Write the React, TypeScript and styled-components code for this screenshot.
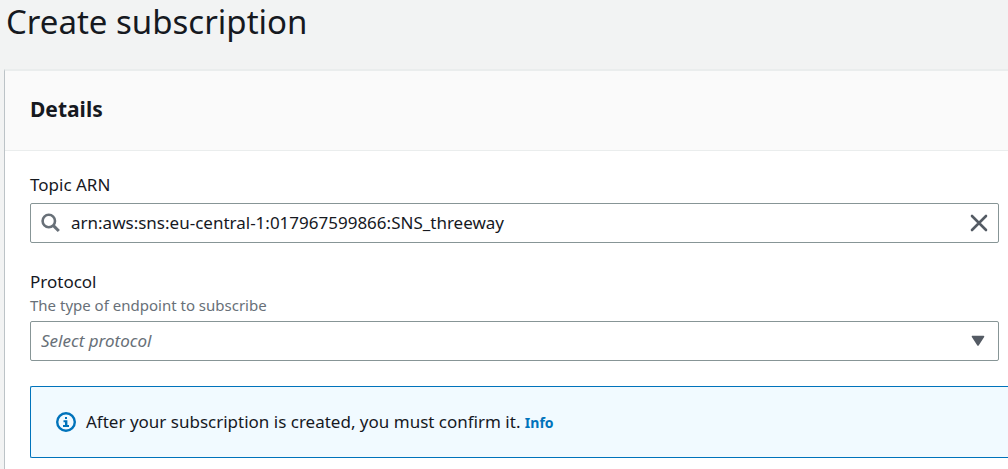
import React, { useState } from "react";
import styled, { createGlobalStyle } from "styled-components";

const GlobalStyle = createGlobalStyle`
  * { box-sizing: border-box; }
  body {
    margin: 0;
    background: #f2f3f3;
    color: #16191f;
    font-family: "Noto Sans", "Open Sans", sans-serif;
    font-size: 17px;
    line-height: 24px;
  }
`;

const Page = styled.main`
  display: flex;
  flex-direction: column;
  min-height: 100vh;
  padding-left: 4px;
  overflow-x: hidden;
`;

const Title = styled.h1`
  margin: 0;
  padding: 0 0 25px 2px;
  font-size: 33px;
  font-weight: 400;
  line-height: 44px;
`;

const Panel = styled.section`
  flex: 1;
  background: #ffffff;
  border-top: 2px solid #eaeded;
  border-left: 1px solid #bcc3c7;
`;

const PanelHeader = styled.header`
  padding: 22px 25px 25px;
  background: #fafafa;
  border-bottom: 1px solid #eaeded;
`;

const PanelTitle = styled.h2`
  margin: 0;
  font-size: 21px;
  font-weight: 700;
  line-height: 32px;
`;

const Form = styled.form`
  display: flex;
  flex-direction: column;
  gap: 25px;
  padding: 22px 0 11px 25px;
`;

const Fields = styled.div`
  display: flex;
  flex-direction: column;
  gap: 27px;
  margin-right: 9px;
`;

const Field = styled.div`
  display: flex;
  flex-direction: column;
`;

const Label = styled.label`
  align-self: flex-start;
`;

const Description = styled.span`
  padding-top: 1px;
  color: #687078;
  font-size: 15px;
  line-height: 20px;
`;

const Control = styled.div`
  display: flex;
  align-items: center;
  height: 40px;
  margin-top: 6px;
  padding: 0 10px;
  background: #ffffff;
  border: 1px solid #879596;
  border-radius: 2px;
`;

const TextInput = styled.input`
  flex: 1;
  min-width: 0;
  margin-left: 10px;
  padding: 0;
  border: 0;
  outline: 0;
  background: none;
  color: inherit;
  font: inherit;
`;

const ClearButton = styled.button`
  display: flex;
  padding: 0;
  border: 0;
  background: none;
  cursor: pointer;
`;

const SelectControl = styled(Control)`
  display: grid;
  padding: 0;

  > * {
    grid-area: 1 / 1;
  }

  > svg {
    justify-self: end;
    margin-right: 13px;
    pointer-events: none;
  }
`;

const Select = styled.select`
  appearance: none;
  width: 100%;
  height: 38px;
  padding: 0 40px 0 10px;
  border: 0;
  outline: 0;
  background: none;
  color: #687078;
  font: inherit;
  font-style: italic;
`;

const Alert = styled.div`
  display: flex;
  align-items: center;
  gap: 10px;
  min-height: 72px;
  padding: 0 25px;
  background: #f1faff;
  border: 1px solid #0073bb;
  border-right: 0;
  border-radius: 2px 0 0 2px;
`;

const AlertText = styled.p`
  margin: 0;
`;

const InfoLink = styled.a`
  color: #0073bb;
  font-size: 14px;
  font-weight: 700;
  text-decoration: none;
`;

const SearchIcon = () => (
  <svg width="20" height="20" viewBox="0 0 20 20" fill="none" stroke="#687078" strokeWidth="2.6" aria-hidden="true">
    <circle cx="7.8" cy="8" r="6.2" />
    <path d="M12.4 12.6 17.8 18" strokeWidth="3" />
  </svg>
);

const CloseIcon = () => (
  <svg width="18" height="18" viewBox="0 0 18 18" fill="none" stroke="#545b64" strokeWidth="2.6" strokeLinecap="round" aria-hidden="true">
    <path d="M2 2 16 16M16 2 2 16" />
  </svg>
);

const CaretIcon = () => (
  <svg width="14" height="12" viewBox="0 0 14 12" fill="#545b64" stroke="#545b64" strokeWidth="1.6" strokeLinejoin="round" aria-hidden="true">
    <path d="M1.5 1.5H12.5L7 10Z" />
  </svg>
);

const InfoIcon = () => (
  <svg width="20" height="20" viewBox="0 0 20 20" fill="none" stroke="#0073bb" aria-hidden="true">
    <circle cx="10" cy="10" r="8.8" strokeWidth="2.4" />
    <path d="M9 5H11V7H9Z" fill="#0073bb" stroke="none" />
    <path d="M7.5 8.2H11.4V13H13V15H7V13H9V10.2H7.5Z" fill="#0073bb" stroke="none" />
  </svg>
);

export default function App() {
  const [arn, setArn] = useState("arn:aws:sns:eu-central-1:017967599866:SNS_threeway");

  return (
    <>
      <GlobalStyle />
      <Page>
        <Title>Create subscription</Title>
        <Panel>
          <PanelHeader>
            <PanelTitle>Details</PanelTitle>
          </PanelHeader>
          <Form>
            <Fields>
              <Field>
                <Label htmlFor="topic-arn">Topic ARN</Label>
                <Control>
                  <SearchIcon />
                  <TextInput id="topic-arn" type="text" value={arn} onChange={(e) => setArn(e.target.value)} />
                  <ClearButton type="button" aria-label="Clear topic ARN" onClick={() => setArn("")}>
                    <CloseIcon />
                  </ClearButton>
                </Control>
              </Field>
              <Field>
                <Label htmlFor="protocol">Protocol</Label>
                <Description id="protocol-description">The type of endpoint to subscribe</Description>
                <SelectControl>
                  <Select id="protocol" aria-describedby="protocol-description" defaultValue="">
                    <option value="">Select protocol</option>
                  </Select>
                  <CaretIcon />
                </SelectControl>
              </Field>
            </Fields>
            <Alert>
              <InfoIcon />
              <AlertText>
                After your subscription is created, you must confirm it. <InfoLink href="#info">Info</InfoLink>
              </AlertText>
            </Alert>
          </Form>
        </Panel>
      </Page>
    </>
  );
}
